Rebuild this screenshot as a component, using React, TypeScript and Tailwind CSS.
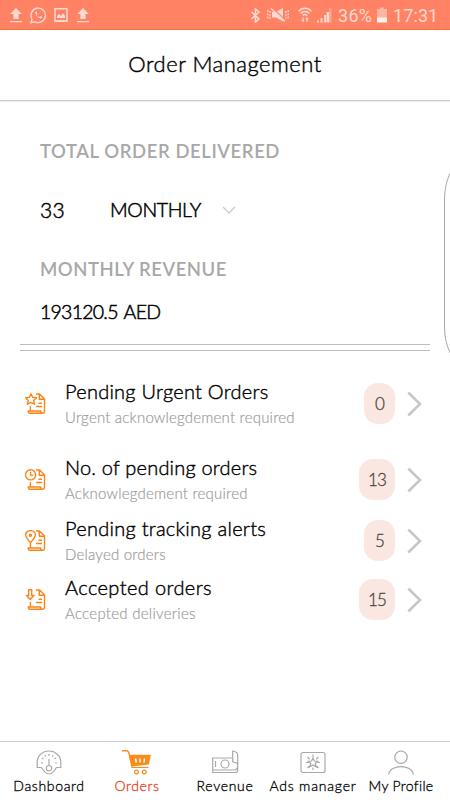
import React from "react";

const Upload = () => (
  <svg className="h-4 w-3 shrink-0" viewBox="0 0 12 16" fill="#ffd9cf">
    <path d="M6 1 11.8 7H8.6v5H3.4V7H.2zM0 14h12v1.2H0z" />
  </svg>
);

function StatusBar() {
  return (
    <header className="flex h-[30px] shrink-0 items-start border-b border-[#ff6c3e] bg-[#ff8265] pt-[7px] font-[Roboto,sans-serif] text-[#ffd9cf]">
      <div className="flex w-[255px] pl-2.5">
        <Upload />
        <svg className="ml-2 h-[17px] w-[17px]" viewBox="0 0 17 17" fill="none" stroke="#ffd9cf" strokeWidth="1.4">
          <path d="M1 15.7 2 12A7.2 7.2 0 1 1 5 14.8z" />
          <path d="M5.7 4.5c-2 2 3.5 8 6 6.8l.7-1.2-2-1-1 1C8 9.500 7 8.300 6.700 7.400l.8-.9-.8-2z" fill="#ffd9cf" stroke="none" />
        </svg>
        <svg className="ml-[7px] h-4 w-[14px]" viewBox="0 0 14 16" fill="none" stroke="#ffd9cf" strokeWidth="1.6">
          <path d="M1 1.800h12v12.200H1z" />
          <path d="M3 11V9l2-2 2 2 2-3 2 3v2z" fill="#ffd9cf" stroke="none" />
          <path d="M.2 14.200h13.600" />
        </svg>
        <div className="ml-[9px]"><Upload /></div>
      </div>
      <svg className="mt-px -ml-[5px] h-[15px] w-[11px]" viewBox="0 0 11 15" fill="none" stroke="#ffd9cf" strokeWidth="1.600">
        <path d="m1.500 4 7.500 7-3.500 3V1L9 4l-7.500 7" />
      </svg>
      <svg className="ml-[6px] h-4 w-[22px]" viewBox="0 0 22 16" fill="none" stroke="#ffd9cf" strokeWidth="1.300">
        <path d="M5 5h4l7-4v13.500L9 10.500H5z" fill="#ffd9cf" stroke="none" />
        <path d="m5 .8 13.500 12.500" stroke="#ff8265" strokeWidth="1.200" />
        <path d="m4 1.500 14 13" strokeWidth="1.500" />
        <path d="M3 4v8M.8 3v9M19 4v8M21.200 3v9" strokeDasharray="2 1.200" />
      </svg>
      <svg className="ml-[9px] h-4 w-[14px]" viewBox="0 0 14 16" fill="none" stroke="#ffd9cf" strokeWidth="1.500">
        <path d="M.6 4.200c3.500-4 9.300-4 12.800 0M2.700 6.500c2.500-2.700 6.100-2.700 8.600 0M4.800 8.600c1.400-1.400 3-1.400 4.400 0" />
        <path d="m3 12.800 2.200 2.500 1.200-1.800H5.800V10.500H4.500v2.300zM11 12.500 8.900 10l-2 2.500h1.400V15h1.300v-2.500z" fill="#ffd9cf" stroke="none" />
      </svg>
      <svg className="ml-[4px] h-4 w-4" viewBox="0 0 16 16" fill="#ffd9cf">
        <path d="M1 13.500h2v2H1zM4.500 11h2v4.500h-2zM8 8h2v7.500H8z" />
        <path d="M10.500 5H13v10.500h-2.500z" />
        <path opacity=".4" d="M13 1h2.500v14.500H13z" />
      </svg>
      <span className="ml-[6px] w-[37px] text-[18px] leading-[18px] tracking-[0.3px]">36%</span>
      <svg className="ml-[2px] h-4 w-2.5" viewBox="0 0 10 16">
        <path d="M3 .5h4V2h3v9H0V2h3z" fill="#ffb3a1" />
        <path d="M0 10.500h10v5H0z" fill="#fff1ed" />
      </svg>
      <span className="ml-1.5 text-[18px] leading-[18px] tracking-[0.100px]">17:31</span>
    </header>
  );
}

const marks: Record<string, React.ReactNode> = {
  star: <path d="m6 .8 1.600 3.500 3.900.4-2.800 2.700.8 3.800L6 9.400l-3.500 1.800.8-3.800L.5 4.700l3.900-.4z" />,
  clock: <><circle cx="5.600" cy="5.800" r="5.100" /><path d="M5.600 2.700v3.400h2.700" /></>,
  pin: <><path d="M5.500 12.700C3 9.500.6 7.400.6 5a4.900 4.400 0 0 1 9.800 0c0 2.400-2.400 4.500-4.900 7.700z" /><circle cx="5.500" cy="5.200" r="1" /></>,
  arrow: <path d="M3.700.8h3v5.700h2.200L5.200 10.500 1.500 6.500h2.200z" />,
};

const OrderIcon = ({ kind }: { kind: string }) => (
  <svg className="h-[21px] w-[21px]" viewBox="0 0 21 21" fill="none" stroke="#fb8416" strokeWidth="1.400" strokeLinejoin="round">
    {marks[kind]}
    <path d="M11 1h3.500l5 5v12.500c0 1.200-.7 1.700-1.800 1.700H5c-1.100 0-1.800-.8-1.800-2.200h12.500c0 1.500.7 2.200 1.800 2.200M14.300 1v5.200h5.200M5.400 13v5M13.500 10.300H17M11 13.500h6" />
  </svg>
);

type Row = { kind: string; title: string; sub: string; count: number; row: string; ts: string; ss: string; badge: string };
const rows: Row[] = [
  { kind: "star", title: "Pending Urgent Orders", sub: "Urgent acknowlegdement required", count: 0, row: "mb-[35px]", ts: "tracking-[0.250px]", ss: "tracking-[0.200px]", badge: "w-[31px]" },
  { kind: "clock", title: "No. of pending orders", sub: "Acknowlegdement required", count: 13, row: "mb-[20px]", ts: "tracking-[0.200px]", ss: "tracking-[0.220px]", badge: "w-9" },
  { kind: "pin", title: "Pending tracking alerts", sub: "Delayed orders", count: 5, row: "mb-[18px]", ts: "tracking-[0.270px]", ss: "tracking-[0.200px]", badge: "w-[31px]" },
  { kind: "arrow", title: "Accepted orders", sub: "Accepted deliveries", count: 15, row: "", ts: "tracking-[0.400px]", ss: "tracking-[0.270px]", badge: "w-9" },
];

function OrderRow({ r }: { r: Row }) {
  return (
    <li className={`flex h-[41px] items-center pl-[25px] ${r.row}`}>
      <OrderIcon kind={r.kind} />
      <div className="mt-px ml-[19px] flex-1 font-light whitespace-nowrap">
        <div className={`text-[20px] leading-[25px] text-black [-webkit-text-stroke:0.400px] ${r.ts}`}>{r.title}</div>
        <div className={`text-[15px] leading-[26px] text-[#9c9c9c] [-webkit-text-stroke:0.200px] ${r.ss}`}>{r.sub}</div>
      </div>
      <span className={`flex h-[41px] items-center justify-center rounded-[14px] bg-[#fae7e1] text-[17px] font-light tracking-[-0.900px] text-[#4e4745] [-webkit-text-stroke:0.300px] ${r.badge}`}>{r.count}</span>
      <svg className="mr-[28px] ml-3 h-[26px] w-[15px]" viewBox="0 0 15 26" fill="none" stroke="#c7c7c7" strokeWidth="2.600">
        <path d="m1.300 1.500 11.700 11.500L1.300 24.500" />
      </svg>
    </li>
  );
}

const tabIcons = [
  <path d="M5.500 17.500H1.200V12a11.800 11 0 0 1 23.600 0v5.500h-4.300C19 20 16.500 24 13 24s-6-4-7.500-6.500M13 9v6.500M13 4v2M5 13h2M19 13h2M6 8l1.500 1M20 8l-1.500 1M9 5l.7 1.500M17 5l-.7 1.500M13 15.500a2.700 2.700 0 1 1 0 5.400 2.700 2.700 0 0 1 0-5.400" />,
  <g stroke="#fb8c1c"><path d="M-2 .8h4.500C4.500.8 5 2.500 5.300 5" strokeWidth="1.500" /><path d="M4.800 4.800H27l-2.200 9.700L7.500 16.500z" fill="#fb8c1c" stroke="none" /><path d="m5.500 6 2.500 11.500h16.500" /><circle cx="12.500" cy="22" r="1.900" /><circle cx="20.300" cy="22" r="1.900" /><path d="m11.500 8.500.8 4M16 8.500v4M20.500 8.500l-.5 4" stroke="white" strokeWidth="1.500" /></g>,
  <path d="M20 8H.7v14.500H23c2 0 2.700-1 2.700-2.500V5c0-2-2-3.500-5-4v11c3 .3 5 1.500 5 3.500M.7 20H22c2 0 3.500-1.500 3.700-4M3.500 11v6M13 10a4 4 0 1 1 0 8 4 4 0 0 1 0-8" />,
  <path d="M3 2.500h20a2 2 0 0 1 2 2v16a2 2 0 0 1-2 2H3a2 2 0 0 1-2-2v-16a2 2 0 0 1 2-2M13 8l1.400 3 3.300.3-2.500 2.200.8 3.200-3-1.700-3 1.700.8-3.200-2.500-2.200 3.300-.3zM13 4.500V7M13 17.500V20M6 12.500h2.500M17.500 12.500H20M7.500 7l2.300 2.300M18.500 7l-2.300 2.300M7.500 18l2-2M18.500 18l-2-2" />,
  <path d="M13 1a6.200 6.200 0 1 1 0 12.400A6.200 6.200 0 0 1 13 1M.7 24.500C2 14 24 14 25.300 24.500" />,
];

const tabs = [
  ["Dashboard", "tracking-[0.650px]"],
  ["Orders", "tracking-[0.600px] text-[#e5401c]"],
  ["Revenue", "tracking-[0.700px]"],
  ["Ads manager", "tracking-[0.800px]"],
  ["My Profile", "tracking-[0.350px]"],
];

export default function App() {
  return (
    <div className="relative flex h-[800px] w-[450px] flex-col overflow-hidden bg-white font-[Lato,sans-serif] text-black">
      <StatusBar />
      <h1 className="flex h-[71px] shrink-0 items-center justify-center border-b border-[#cbcbcb] pb-0.5 text-[22px] leading-[28px] font-light shadow-[0_1px_1px_#eeeeee] [-webkit-text-stroke:0.400px]">
        <span className="tracking-[0.500px]">Order Management</span>
      </h1>
      <section className="flex h-[243px] shrink-0 flex-col pl-10 whitespace-nowrap">
        <h2 className="mt-[36px] text-[18.500px] leading-[28px] font-semibold text-[#a8a8a8]"><span className="tracking-[0.570px]">TOTAL ORDER DELIVERED</span></h2>
        <div className="mt-[31px] flex h-[28px] items-center leading-[28px] font-light [-webkit-text-stroke:0.500px]">
          <span className="w-[70px] text-[21px] tracking-[0.200px]">33</span>
          <span className="w-[112px] text-[19.500px] tracking-[-0.350px]">MONTHLY</span>
          <svg className="h-2 w-3.5" viewBox="0 0 14 8" fill="none" stroke="#c4c4c4" strokeWidth="1.200"><path d="m1 1 6 6 6-6" /></svg>
        </div>
        <h2 className="mt-[31px] text-[18.500px] leading-[28px] font-semibold text-[#a8a8a8]"><span className="tracking-[0.500px]">MONTHLY REVENUE</span></h2>
        <p className="mt-[15px] text-[19.500px] leading-[28px] font-light [-webkit-text-stroke:0.500px]"><span className="tracking-[-0.750px] [word-spacing:2px]">193120.5 AED</span></p>
      </section>
      <div className="mx-5 h-[7px] shrink-0 border-y border-[#bdbdbd]" />
      <ul className="mt-[32px] flex flex-1 flex-col">
        {rows.map((r) => <OrderRow key={r.kind} r={r} />)}
      </ul>
      <nav className="flex h-[59px] shrink-0 border-t border-[#cfcfcf] px-[5px]">
        {tabs.map(([name, cls], i) => (
          <div key={name} className="flex w-[88px] flex-col items-center whitespace-nowrap">
            <svg className="mt-2 h-[25px] w-[26px] overflow-visible" viewBox="0 0 26 25" fill="none" stroke="#a9a9a9" strokeWidth="1.200">{tabIcons[i]}</svg>
            <span className={`mt-[1px] text-[14px] leading-[20px] font-light [-webkit-text-stroke:0.300px] ${cls}`}>{name}</span>
          </div>
        ))}
      </nav>
      <div className="absolute top-[166px] left-[444px] h-[194px] w-[30px] rounded-[15px/34px] border border-[#a8a8a8]" />
    </div>
  );
}
